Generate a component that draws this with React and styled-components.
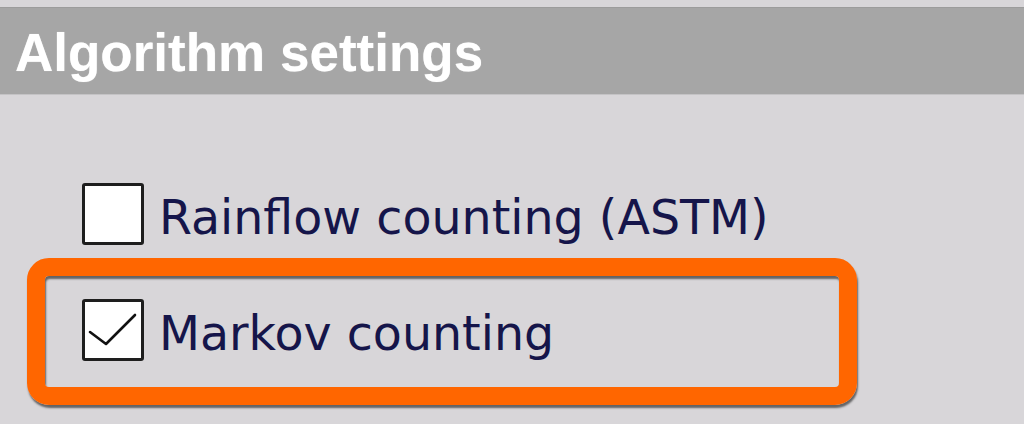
import React from "react";
import styled, { createGlobalStyle } from "styled-components";

const Global = createGlobalStyle`
  html, body { margin: 0; padding: 0; background: #d8d6d9; }
  body { width: 1024px; height: 424px; overflow: hidden; }
`;

const Page = styled.div`
  display: flex;
  flex-direction: column;
  width: 1024px;
  height: 424px;
  padding-top: 7px;
  box-sizing: border-box;
  background: #d8d6d9;
`;

const Header = styled.div`
  height: 88px;
  display: flex;
  align-items: center;
  padding-left: 15px;
  background: #a6a6a6;
  border-top: 1px solid #9c9c9c;
  border-bottom: 1px solid #c4c3c5;
  box-sizing: border-box;
`;

const Title = styled.h2`
  margin: 2px 0 0 0;
  font-family: "Liberation Sans", Arial, sans-serif;
  font-weight: bold;
  font-size: 53px;
  color: #ffffff;
  text-shadow: 0 0 1px rgba(255, 255, 255, 0.6);
`;

const Content = styled.div`
  display: flex;
  flex-direction: column;
  padding: 88px 0 0 27px;
  gap: 13px;
`;

const Row = styled.label`
  display: flex;
  align-items: center;
  gap: 15px;
  height: 62px;
  padding-left: ${(p) => p.$indent}px;
`;

const Frame = styled.div`
  width: 830px;
  height: 147px;
  box-sizing: border-box;
  border: 18px solid #ff6600;
  border-radius: 22px;
  padding: 23px 0 0 37px;
  box-shadow: 1px 3px 2px rgba(50, 50, 50, 0.7),
    inset 1px 3px 2px rgba(50, 50, 50, 0.7);
`;

const Box = styled.span`
  width: 62px;
  height: 62px;
  flex: none;
  box-sizing: border-box;
  background: #ffffff;
  border: 3px solid #1e1e1e;
  border-radius: 3px;
  display: flex;
`;

const Label = styled.span`
  font-family: "DejaVu Sans", Verdana, sans-serif;
  font-size: 47.5px;
  color: #15154a;
  line-height: 62px;
  margin-top: 7px;
`;

function Checkbox({ checked }) {
  return (
    <Box>
      {checked && (
        <svg width="56" height="56" viewBox="0 0 56 56">
          <polyline
            points="5,30 21,42 50,13"
            fill="none"
            stroke="#111"
            strokeWidth="2.6"
            strokeLinejoin="round"
            strokeLinecap="round"
          />
        </svg>
      )}
    </Box>
  );
}

export default function App() {
  return (
    <>
      <Global />
      <Page>
        <Header>
          <Title>Algorithm settings</Title>
        </Header>
        <Content>
          <Row $indent={55}>
            <Checkbox />
            <Label>Rainflow counting (ASTM)</Label>
          </Row>
          <Frame>
            <Row $indent={0}>
              <Checkbox checked />
              <Label>Markov counting</Label>
            </Row>
          </Frame>
        </Content>
      </Page>
    </>
  );
}
